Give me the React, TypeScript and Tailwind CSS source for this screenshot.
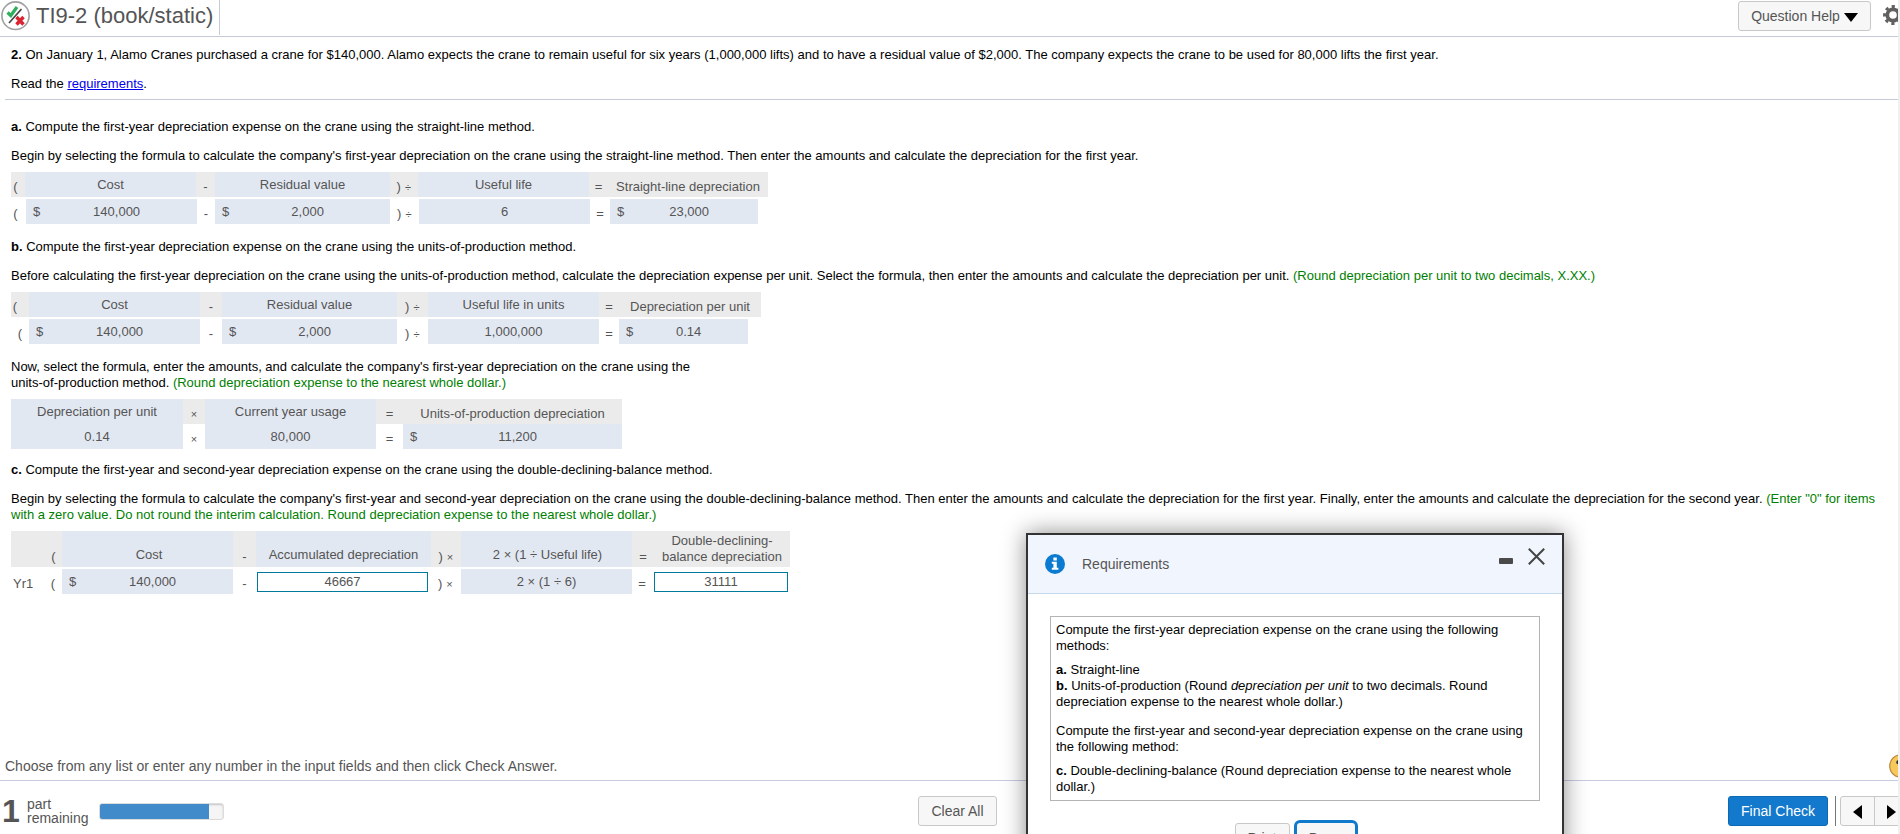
import React from 'react';

type CellProps = { className?: string; children?: React.ReactNode };

// Grey cell of a formula heading
const Head: React.FC<CellProps> = ({ className = '', children }) => (
  <div className={`flex h-full shrink-0 items-center justify-center whitespace-pre bg-[#ebebeb] pt-[4px] ${className}`}>{children}</div>
);

// Operator between two values
const Op: React.FC<CellProps> = ({ className = '', children }) => (
  <div className={`flex h-full shrink-0 items-center justify-center whitespace-pre pt-[4px] ${className}`}>{children}</div>
);

const Sign: React.FC<CellProps> = ({ children }) => <span className="inline-block w-[7px] text-center text-[11px]">{children}</span>;

const Box: React.FC<CellProps> = ({ className = '', children }) => (
  <div className={`flex h-full shrink-0 items-center justify-center whitespace-pre bg-[#e2e8f2] ${className}`}>{children}</div>
);

const Money: React.FC<CellProps> = ({ className = '', children }) => (
  <div className={`flex h-full shrink-0 items-center bg-[#e2e8f2] pr-1 pl-[7px] ${className}`}>
    <span>$</span>
    <span className="flex-1 text-center">{children}</span>
  </div>
);

const Row: React.FC<CellProps> = ({ className = '', children }) => (
  <div className={`flex h-[25px] text-[13px] text-[#555] ${className}`}>{children}</div>
);

const Header: React.FC = () => (
  <header className="flex h-[37px] shrink-0 items-start justify-between border-b border-[#c5cad9]">
    <div className="flex h-[35px] items-start border-r border-[#c5cad9] pr-[6px]">
      <svg className="mt-px ml-px h-[30px] w-[29px]" viewBox="0 0 29 30" fill="none">
        <ellipse cx="14.5" cy="14.7" rx="13.6" ry="13.8" stroke="#a0a0a0" strokeWidth="1.6" />
        <path d="M20.5 8L8 22" stroke="#444" strokeWidth="1.7" />
        <path d="M6.5 11.5L9.8 14.5L16 6" stroke="#2fae5c" strokeWidth="3.2" />
        <path d="M15.5 16L22.5 23.5M22.5 16L15.5 23.5" stroke="#dc2430" strokeWidth="3.4" />
      </svg>
      <h1 className="mt-[2px] ml-[6px] whitespace-nowrap text-[22px] leading-[28px] text-[#555]">TI9-2 (book/static)</h1>
    </div>
    <div className="flex items-start">
      <button className="mt-px flex h-[30px] w-[133px] items-center justify-center gap-1 rounded-[3px] border border-[#c8c8c8] bg-[#f7f7f7] text-[14px] text-[#555]">
        Question Help
        <svg className="mt-[3px] h-[9px] w-[14px]" viewBox="0 0 14 9">
          <path d="M0 0h14L7 9z" fill="#000" />
        </svg>
      </button>
      <div className="mt-[5px] ml-[12px] w-[15px] overflow-hidden">
        <svg className="h-5 w-5 max-w-none" viewBox="0 0 20 20" fill="none" stroke="#606060">
          <circle cx="10" cy="10" r="5.7" strokeWidth="3.8" />
          <circle cx="10" cy="10" r="8.4" strokeWidth="3" strokeDasharray="3.2 3.397" strokeDashoffset="1.6" />
        </svg>
      </div>
    </div>
  </header>
);

const StraightLine: React.FC = () => (
  <div className="mt-2">
    <Row>
      <Head className="w-[14px] pr-[5px]">(</Head>
      <Box className="w-[171px]">Cost</Box>
      <Head className="w-[19px]">-</Head>
      <Box className="w-[175px]">Residual value</Box>
      <Head className="w-[28px]">) <Sign>÷</Sign></Head>
      <Box className="w-[171px]">Useful life</Box>
      <Head className="w-[21px] pr-[2px]">=</Head>
      <Head className="w-[158px] pr-[2px]">Straight-line depreciation</Head>
    </Row>
    <Row className="mt-[2px]">
      <Op className="w-[15px] pr-[6px]">(</Op>
      <Money className="w-[171px]">140,000</Money>
      <Op className="w-[18px]">-</Op>
      <Money className="w-[175px]">2,000</Money>
      <Op className="w-[29px]">) <Sign>÷</Sign></Op>
      <Box className="w-[171px]">6</Box>
      <Op className="w-[20px]">=</Op>
      <Money className="w-[148px]">23,000</Money>
    </Row>
  </div>
);

const PerUnit: React.FC = () => (
  <div className="mt-2">
    <Row>
      <Head className="w-[18px] pr-[10px]">(</Head>
      <Box className="w-[171px]">Cost</Box>
      <Head className="w-[22px]">-</Head>
      <Box className="w-[175px]">Residual value</Box>
      <Head className="w-[31px]">) <Sign>÷</Sign></Head>
      <Box className="w-[171px]">Useful life in units</Box>
      <Head className="w-[20px]">=</Head>
      <Head className="w-[142px]">Depreciation per unit</Head>
    </Row>
    <Row className="mt-[2px]">
      <Op className="w-[18px]">(</Op>
      <Money className="w-[171px]">140,000</Money>
      <Op className="w-[22px]">-</Op>
      <Money className="w-[175px]">2,000</Money>
      <Op className="w-[31px]">) <Sign>÷</Sign></Op>
      <Box className="w-[171px]">1,000,000</Box>
      <Op className="w-[20px]">=</Op>
      <Money className="w-[129px]">0.14</Money>
    </Row>
  </div>
);

const UnitsOfProduction: React.FC = () => (
  <div className="mt-2">
    <Row>
      <Box className="w-[172px]">Depreciation per unit</Box>
      <Head className="w-[22px]"><Sign>×</Sign></Head>
      <Box className="w-[171px]">Current year usage</Box>
      <Head className="w-[27px]">=</Head>
      <Head className="w-[219px]">Units-of-production depreciation</Head>
    </Row>
    <Row>
      <Box className="w-[172px]">0.14</Box>
      <Op className="w-[22px]"><Sign>×</Sign></Op>
      <Box className="w-[171px]">80,000</Box>
      <Op className="w-[27px]">=</Op>
      <Money className="w-[219px]">11,200</Money>
    </Row>
  </div>
);

const DoubleDeclining: React.FC = () => (
  <div className="mt-2">
    <div className="flex h-[36px] w-[779px] items-end bg-[#ebebeb] text-[13px] text-[#555]">
      <div className="w-[33px]" />
      <div className="w-[18px] pb-[2px] pl-px text-center">(</div>
      <div className="flex h-full w-[171px] items-end justify-center bg-[#e2e8f2] pb-[4px] pl-[3px]">Cost</div>
      <div className="w-[23px] pb-[2px] text-center">-</div>
      <div className="flex h-full w-[175px] items-end justify-center bg-[#e2e8f2] pb-[4px]">Accumulated depreciation</div>
      <div className="w-[30px] pb-[2px] text-center">) <Sign>×</Sign></div>
      <div className="flex h-full w-[171px] items-end justify-center bg-[#e2e8f2] pb-[4px] pl-[2px]">2 × (1 ÷ Useful life)</div>
      <div className="w-[22px] pb-[2px] text-center">=</div>
      <div className="w-[136px] pb-[2px] text-center">Double-declining-<br />balance depreciation</div>
    </div>
    <Row className="mt-[2px]">
      <Op className="w-[24px] justify-start pl-[2px]">Yr1</Op>
      <Op className="w-[27px] pl-[9px]">(</Op>
      <Money className="w-[171px]">140,000</Money>
      <Op className="w-[24px] pr-px">-</Op>
      <div className="mt-[3px] flex h-[20px] w-[171px] items-center justify-center border border-[#007a9c] bg-white">46667</div>
      <Op className="w-[33px] pl-[2px]">) <Sign>×</Sign></Op>
      <Box className="w-[171px]">2 × (1 ÷ 6)</Box>
      <Op className="w-[22px] pr-[2px]">=</Op>
      <div className="mt-[3px] flex h-[20px] w-[134px] items-center justify-center border border-[#007a9c] bg-white">31111</div>
    </Row>
  </div>
);

const RequirementsDialog: React.FC = () => (
  <div className="absolute top-[533px] left-[1026px] h-[340px] w-[538px] border-2 border-[#333] bg-white shadow-[0_0_22px_rgba(0,0,0,0.45)]">
    <div className="flex h-[59px] items-start border-b border-[#c5d9ec] bg-[#f1f5fd] pt-[18px] pr-[17px] pl-[17px]">
      <svg className="mt-px h-5 w-5" viewBox="0 0 20 20">
        <circle cx="10" cy="10" r="10" fill="#0a7bd1" />
        <path d="M8.4 3.6h3.4v2.9h-3.4zM6.8 7.8h5v6h1.6v2H6.8v-2h1.6V9.8H6.8z" fill="#fff" />
      </svg>
      <span className="ml-[17px] text-[14px] leading-[22px] text-[#555]">Requirements</span>
      <div className="mt-[5px] ml-auto h-[6px] w-[14px] rounded-[1px] bg-[#4a4a4a]" />
      <svg className="-mt-[5px] ml-[15px] h-[17px] w-[17px]" viewBox="0 0 17 17" stroke="#444" strokeWidth="2">
        <path d="M0.8 0.8L16.2 16.2M16.2 0.8L0.8 16.2" />
      </svg>
    </div>
    <div className="mx-[22px] mt-[22px] h-[185px] border border-[#b4b4b4] pt-[5px] pl-[5px] text-[13px] leading-4 text-black">
      <p>Compute the first-year depreciation expense on the crane using the following<br />methods:</p>
      <p className="mt-2">
        <b>a.</b> Straight-line<br />
        <b>b.</b> Units-of-production (Round <i>depreciation per unit</i> to two decimals. Round<br />
        depreciation expense to the nearest whole dollar.)
      </p>
      <p className="mt-[13px]">Compute the first-year and second-year depreciation expense on the crane using<br />the following method:</p>
      <p className="mt-2"><b>c.</b> Double-declining-balance (Round depreciation expense to the nearest whole<br />dollar.)</p>
    </div>
    <div className="mt-[19px] flex justify-center gap-1 pl-[2px] text-[14px] text-[#555]">
      <button className="mt-[3px] h-[30px] w-[55px] rounded-[3px] border border-[#c8c8c8] bg-[#f7f7f7]">Print</button>
      <button className="h-[36px] w-[64px] rounded-[6px] border-[3px] border-[#0f79cc] bg-[#f7f7f7]">Done</button>
    </div>
  </div>
);

const Footer: React.FC = () => (
  <footer className="flex h-[54px] shrink-0 items-start border-t border-[#c5cce0] text-[14px] text-[#555]">
    <span className="mt-[14px] ml-[2px] w-[18px] shrink-0 text-[32px] leading-[32px] font-bold">1</span>
    <span className="mt-[16px] ml-[7px] w-[72px] shrink-0 leading-[14px]">part<br />remaining</span>
    <div className="mt-[22px] h-[17px] w-[125px] shrink-0 overflow-hidden rounded-[3px] border border-[#dcdcdc] bg-[#f5f5f5] shadow-[inset_0_1px_2px_rgba(0,0,0,0.2)]">
      <div className="-mt-px -ml-px h-[17px] w-[110px] bg-[#428bca]" />
    </div>
    <button className="mt-[15px] ml-[694px] h-[30px] w-[79px] shrink-0 rounded-[3px] border border-[#c8c8c8] bg-[#f7f7f7]">Clear All</button>
    <button className="mt-[15px] ml-[731px] h-[30px] w-[100px] shrink-0 rounded-[3px] border border-[#0c69b4] bg-[#1279cc] text-white">Final Check</button>
    <div className="mt-[15px] ml-[7px] h-[30px] w-px shrink-0 bg-[#777]" />
    <div className="mt-[15px] ml-[4px] flex h-[30px] w-[70px] shrink-0 rounded-l-[3px] border border-[#c8c8c8] bg-[#f7f7f7]">
      <div className="flex w-[34px] shrink-0 items-center justify-center border-r border-[#c8c8c8] pt-px">
        <svg className="h-[14px] w-[9px]" viewBox="0 0 9 14"><path d="M9 0v14L0 7z" fill="#000" /></svg>
      </div>
      <div className="flex w-[34px] shrink-0 items-center pt-px pl-[12px]">
        <svg className="h-[14px] w-[9px]" viewBox="0 0 9 14"><path d="M0 0v14l9-7z" fill="#000" /></svg>
      </div>
    </div>
  </footer>
);

const App: React.FC = () => {
  return (
    <div className="h-[834px] w-[1900px] overflow-hidden bg-[#f0f0f0] font-['Liberation_Sans',Arial,sans-serif]">
      <div className="relative flex h-full w-[1898px] flex-col overflow-hidden bg-white">
        <Header />
        <section className="ml-[5px] h-[63px] shrink-0 border-b border-[#c5cad9] pt-[10px] pl-[6px] text-[13px] leading-4 text-black">
          <p className="tracking-[0.008px]">
            <b>2.</b> On January 1, Alamo Cranes purchased a crane for $140,000. Alamo expects the crane to remain useful for six years (1,000,000 lifts) and to have a residual value of $2,000. The company expects the crane to be used for 80,000 lifts the first year.
          </p>
          <p className="mt-[13px]">Read the <a href="#" className="text-[#0000ee] underline">requirements</a>.</p>
        </section>
        <main className="flex-1 pt-[19px] pl-[11px] text-[13px] leading-4 whitespace-nowrap text-black">
          <p><b>a.</b> Compute the first-year depreciation expense on the crane using the straight-line method.</p>
          <p className="mt-[13px]">
            Begin by selecting the formula to calculate the company's first-year depreciation on the crane using the straight-line method. Then enter the amounts and calculate the depreciation for the first year.
          </p>
          <StraightLine />

          <p className="mt-[15px]"><b>b.</b> Compute the first-year depreciation expense on the crane using the units-of-production method.</p>
          <p className="mt-[13px]">
            Before calculating the first-year depreciation on the crane using the units-of-production method, calculate the depreciation expense per unit. Select the formula, then enter the amounts and calculate the depreciation per unit. <span className="text-[#008000]">(Round depreciation per unit to two decimals, X.XX.)</span>
          </p>
          <PerUnit />

          <p className="mt-[15px]">
            Now, select the formula, enter the amounts, and calculate the company's first-year depreciation on the crane using the<br />
            units-of-production method. <span className="text-[#008000]">(Round depreciation expense to the nearest whole dollar.)</span>
          </p>
          <UnitsOfProduction />

          <p className="mt-[13px]"><b>c.</b> Compute the first-year and second-year depreciation expense on the crane using the double-declining-balance method.</p>
          <p className="mt-[13px]">
            Begin by selecting the formula to calculate the company's first-year and second-year depreciation on the crane using the double-declining-balance method. Then enter the amounts and calculate the depreciation for the first year. Finally, enter the amounts and calculate the depreciation for the second year. <span className="text-[#008000]">(Enter "0" for items<br />with a zero value. Do not round the interim calculation. Round depreciation expense to the nearest whole dollar.)</span>
          </p>
          <DoubleDeclining />
        </main>
        <p className="shrink-0 pb-[5px] pl-[5px] text-[14px] leading-[18px] text-[#555]">Choose from any list or enter any number in the input fields and then click Check Answer.</p>
        <Footer />
        <RequirementsDialog />

        {/* feedback face, cut off by the page edge */}
        <svg className="absolute top-[754px] left-[1889px] h-6 w-6" viewBox="0 0 24 24">
          <circle cx="12" cy="12" r="11.3" fill="#f7c95c" stroke="#b98a3c" strokeWidth="1.2" />
          <ellipse cx="8.8" cy="8.3" rx="1.5" ry="2" fill="#333" />
          <ellipse cx="15.5" cy="8.3" rx="1.5" ry="2" fill="#333" />
        </svg>
      </div>
    </div>
  );
};

export default App;
